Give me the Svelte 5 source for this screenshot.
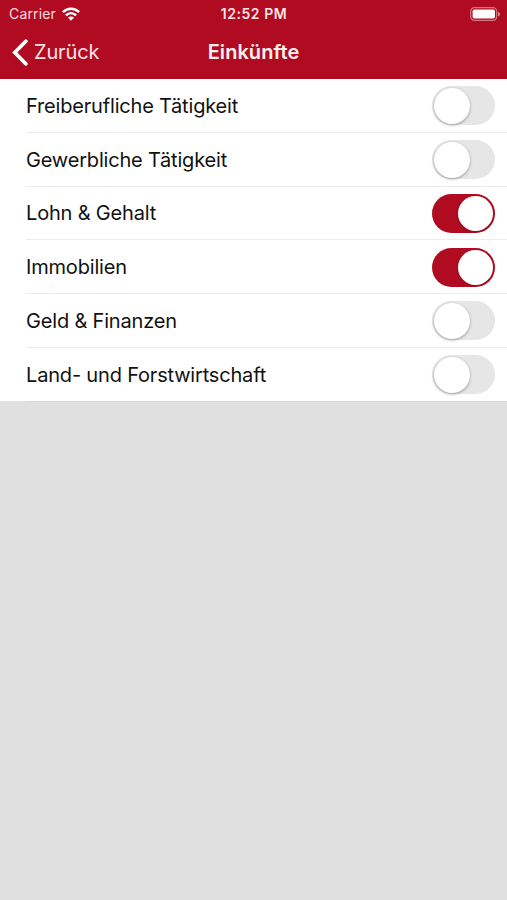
<script>
    let items = $state([
        { id: "freiberuf", label: "Freiberufliche Tätigkeit", active: false },
        { id: "gewerbe", label: "Gewerbliche Tätigkeit", active: false },
        { id: "lohn", label: "Lohn & Gehalt", active: true },
        { id: "immobilien", label: "Immobilien", active: true },
        { id: "finanzen", label: "Geld & Finanzen", active: false },
        { id: "forst", label: "Land- und Forstwirtschaft", active: false },
    ]);

    function toggle(item) {
        item.active = !item.active;
    }
</script>

<div class="screen">
    <header>
        <div class="status">
            <div class="carrier">
                <span>Carrier</span>
                <svg class="wifi" viewBox="0 0 18 14">
                    <g fill="none" stroke="currentColor" stroke-width="2.5">
                        <path d="M0.9 5.2C5.5 0.5 12.5 0.5 17.1 5.2" />
                        <path d="M3.9 8.4C6.9 5.5 11.1 5.5 14.1 8.4" />
                    </g>
                    <path
                        d="M5.9 10.6C7.7 9 10.3 9 12.1 10.6L9 13.7Z"
                        fill="currentColor"
                    />
                </svg>
            </div>
            <span class="time">12:52 PM</span>
            <svg class="battery" viewBox="0 0 31 14">
                <rect
                    x="0.7"
                    y="0.7"
                    width="26"
                    height="12.6"
                    rx="3.7"
                    fill="none"
                    stroke="#fff"
                    stroke-opacity="0.45"
                    stroke-width="1.2"
                />
                <rect x="2.6" y="2.4" width="22.4" height="9.2" rx="1.8" fill="#fff" />
                <path
                    d="M28 4.7C30.8 5.5 30.8 8.5 28 9.3Z"
                    fill="#fff"
                    fill-opacity="0.5"
                />
            </svg>
        </div>
        <nav>
            <button class="back">
                <svg viewBox="0 0 16 27">
                    <path
                        d="M13.8 2.2L2.8 13.5L13.8 24.8"
                        fill="none"
                        stroke="currentColor"
                        stroke-width="3.7"
                        stroke-linecap="round"
                    />
                </svg>
                <span>Zurück</span>
            </button>
            <h1>Einkünfte</h1>
        </nav>
    </header>

    <ul>
        {#each items as item (item.id)}
            <li>
                <span class="label">{item.label}</span>
                <button
                    class="switch"
                    class:on={item.active}
                    role="switch"
                    aria-checked={item.active}
                    aria-label={item.label}
                    onclick={() => toggle(item)}
                >
                    <span class="knob"></span>
                </button>
            </li>
        {/each}
    </ul>
</div>

<style>
    :global(body) {
        background: #e0e0e0;
    }
    .screen {
        height: 900px;
        overflow: hidden;
        background: #e0e0e0;
        font-family: Inter, "Liberation Sans", sans-serif;
        color: #111;
    }
    header {
        height: 79px;
        background: #b00b20;
        color: #fff;
    }
    .status {
        display: grid;
        grid-template-columns: 1fr auto 1fr;
        align-items: center;
        height: 27px;
        padding: 0 6px 0 9px;
        font-size: 14px;
    }
    .carrier {
        display: flex;
        align-items: center;
        gap: 6px;
        letter-spacing: 0.15px;
        color: #fbdfe2;
    }
    .wifi {
        width: 18px;
        height: 14px;
        color: #fff;
    }
    .time {
        margin-right: 2px;
        font-weight: 600;
        letter-spacing: 0.55px;
        color: #fbe4e7;
    }
    .battery {
        width: 31px;
        height: 14px;
        justify-self: end;
    }
    nav {
        display: grid;
        grid-template-columns: 1fr auto 1fr;
        align-items: center;
        height: 50px;
        padding: 0 12px;
    }
    button {
        border: 0;
        padding: 0;
        background: none;
        font: inherit;
        cursor: pointer;
    }
    .back {
        display: flex;
        align-items: center;
        gap: 6px;
        font-size: 20px;
        letter-spacing: -0.15px;
        color: #fbe4e7;
    }
    .back svg {
        width: 16px;
        height: 27px;
        color: #fff;
    }
    h1 {
        margin: 0;
        font-size: 20px;
        font-weight: 600;
        letter-spacing: 0.05px;
        color: #fdf0f1;
    }
    ul {
        margin: 0;
        padding: 0;
        list-style: none;
        background: #fff;
    }
    li {
        box-sizing: border-box;
        display: flex;
        align-items: center;
        justify-content: space-between;
        height: 53.75px;
        padding: 0 12px 0 26px;
        background: linear-gradient(#ececec, #ececec) 26px 100% / 100% 1px no-repeat;
    }
    /* the last separator sits on the grey area below the list */
    li:last-child {
        background:
            linear-gradient(#d8d8d8, #d8d8d8) 26px 100% / 100% 1px no-repeat,
            linear-gradient(#e0e0e0, #e0e0e0) 0 100% / 100% 1px no-repeat;
    }
    .label {
        font-size: 20px;
        letter-spacing: -0.18px;
    }
    .switch {
        box-sizing: border-box;
        display: flex;
        align-items: center;
        width: 63px;
        height: 39px;
        padding: 0 1.5px;
        border-radius: 20px;
        background: #e6e6e6;
    }
    .knob {
        width: 36px;
        height: 36px;
        border-radius: 50%;
        background: #fff;
        box-shadow: 0 1px 3px rgba(0, 0, 0, 0.35);
    }
    .on {
        justify-content: flex-end;
        padding-right: 2px;
        background: #b00b20;
    }
    .on .knob {
        width: 35px;
        height: 35px;
        box-shadow: 0 1px 3px rgba(0, 0, 0, 0.15);
    }
</style>
